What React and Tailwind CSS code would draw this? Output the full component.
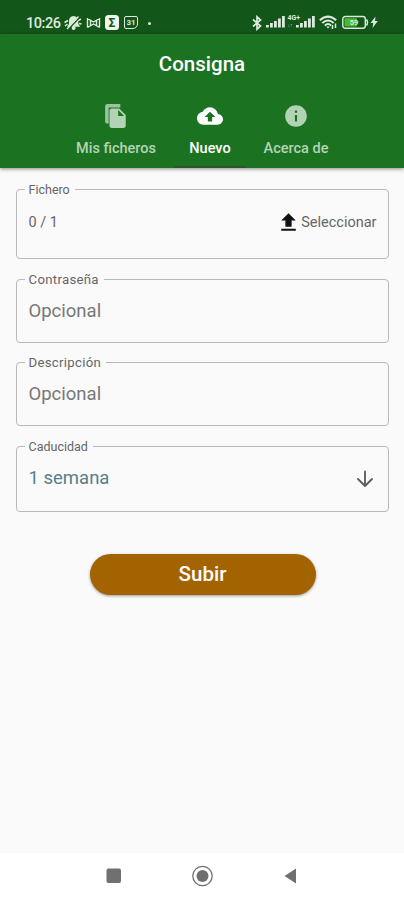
import { MdCloudUpload, MdInfo, MdUpload } from 'react-icons/md';

function FilesIcon({ className }) {
  return (
    <svg className={className} viewBox="0 0 24 24" fill="currentColor">
      <path d="M16 1H4C2.900 1 2 1.900 2 3v14c0 1.100.9 2 2 2h1.200V4.200h10.800z" opacity=".85" />
      <path d="M15 5H8c-1.100 0-2 .9-2 2v14c0 1.100.9 2 2 2h11c1.100 0 2-.9 2-2V11zm-1 7V6.500l5.500 5.500z" fillRule="evenodd" />
    </svg>
  );
}

function Signal() {
  return (
    <svg width="19" height="13" viewBox="0 0 19 13" fill="currentColor">
      <rect x="0" y="10" width="2.8" height="2.500" />
      <rect x="4" y="8" width="2.8" height="4.500" />
      <rect x="8" y="6" width="2.8" height="6.5" />
      <rect x="12" y="3.500" width="2.8" height="9" />
      <rect x="16" y="1" width="2.8" height="11.5" />
    </svg>
  );
}

function StatusBar() {
  return (
    <div className="flex h-[34px] shrink-0 items-start bg-[#125619] pt-[15px] pl-[26px] text-[#dceadd]">
      <span className="w-[37px] text-[14.500px] leading-[17px] font-medium tracking-[-0.45px] whitespace-nowrap">10:26</span>
      <svg className="ml-px" width="18" height="16" viewBox="0 0 18 16" fill="currentColor">
        <path d="M9.500 1c3 .2 4.800 2 4.800 5v3l2 2.700H3l2-2.700V6c0-2.800 1.500-4.800 4.500-5z" />
        <circle cx="9.600" cy="13" r="2" />
        <path d="M1 11 3.500 9M0.500 7.500 4 5.500M14 5.500l3-1.500M15 8.500l2.500 .5" stroke="currentColor" strokeWidth="1.600" />
        <path d="M4.500 14 15.500 2.500" stroke="#125619" strokeWidth="1.600" />
        <path d="M3 14 14.500 1.500" stroke="currentColor" strokeWidth="1.400" />
      </svg>
      <svg className="ml-[4px]" width="15" height="16" viewBox="0 0 15 16" fill="none" stroke="currentColor" strokeWidth="1.400">
        <path d="M1.500 3v9.500M13.500 3v9.500M1.500 3.500 7.500 7l6-3.500M1.500 12.500 7.500 9l6 3.500M4.500 5.500v5M10.500 5.500v5" />
      </svg>
      <span className="ml-[4px] flex h-[15px] w-[14px] items-center justify-center rounded-[3.500px] bg-[#eef6ee] text-[12px] leading-none font-bold text-[#125619]">Σ</span>
      <span className="mt-px ml-[5px] flex h-[13px] w-[14px] items-center justify-center rounded-[2px] rounded-br-[5px] border-[1.500px] border-current text-[8px] leading-none font-bold">31</span>
      <span className="mt-[7px] ml-[10px] size-[2.500px] rounded-full bg-current" />
      <svg className="ml-[101px]" width="10" height="16" viewBox="0 0 10 16" fill="none" stroke="currentColor" strokeWidth="1.700">
        <path d="M1 4.500 8.500 11 5 14.200V1.800L8.500 5 1 11.500" />
      </svg>
      <span className="ml-[4px]"><Signal /></span>
      <span className="ml-[3px] flex w-[13px] flex-col text-[7px] leading-[7px] font-bold"><span>4G+</span><span className="text-[5px] opacity-70">↓↑</span></span>
      <span className="-ml-[5px]"><Signal /></span>
      <svg className="ml-[4px]" width="20" height="15" viewBox="0 0 20 15" fill="none" stroke="currentColor" strokeWidth="2">
        <path d="M.8 5.300Q9 -2 17.200 5.300M3.300 8Q9 3 14.700 8M5.800 10.600Q9 7.500 12.200 10.600" />
        <path d="M7.200 11.500h3.600L9 13.500z" fill="currentColor" stroke="none" />
        <path d="M13.500 14V10M16.500 8.500v4.500" strokeWidth="1.500" />
      </svg>
      <svg className="ml-[3px]" width="27" height="15" viewBox="0 0 27 15">
        <rect x=".8" y="1.500" width="22.500" height="11.800" rx="2.500" fill="#125619" stroke="#dceadd" strokeWidth="1.400" />
        <rect x="2.500" y="3.200" width="12.500" height="8.400" rx="1" fill="#48bd2c" />
        <path d="M24.500 4.500q2 3 0 6" stroke="#dceadd" strokeWidth="1.500" fill="none" />
        <text x="12" y="10.200" fill="#dceadd" fontSize="7.500" fontWeight="700" textAnchor="middle">59</text>
      </svg>
      <svg className="ml-px" width="9" height="14" viewBox="0 0 9 14" fill="currentColor">
        <path d="M5.500 1.500 0.500 8h2.800L2.500 13 7.800 6H5z" />
      </svg>
    </div>
  );
}

function Tab({ icon: Icon, label, active, className }) {
  return (
    <div className={`flex flex-col items-center pt-[10px] ${active ? 'border-b-2 border-[#35502f] text-white' : 'border-b-2 border-transparent text-[#b3d3b5]'} ${className}`}>
      <Icon className="size-[26px]" />
      <span className="mt-[11px] text-[14.500px] leading-[18px] font-medium whitespace-nowrap">{label}</span>
    </div>
  );
}

function Field({ label, labelClass = 'text-[12.500px]', className, children }) {
  return (
    <fieldset className={`mx-[15.500px] rounded-[4px] border border-[#b9b9b9] pr-[11px] pl-[8px] ${className}`}>
      <legend className={`h-[13px] pr-[5px] pl-[4px] leading-[13px] whitespace-nowrap text-[#666] ${labelClass}`}>{label}</legend>
      {children}
    </fieldset>
  );
}

export default function App() {
  return (
    <div className="flex h-[900px] w-[404px] flex-col overflow-hidden bg-[#fafafa] font-[Roboto,sans-serif]">
      <StatusBar />
      <header className="h-[134px] shrink-0 bg-[#1b7322] shadow-[0_1px_4px_rgba(0,0,0,0.45)]">
        <h1 className="h-[59px] pt-[17px] text-center text-[20.500px] leading-[27px] font-medium text-white">Consigna</h1>
        <nav className="flex h-[75px] pl-[60px]">
          <Tab icon={FilesIcon} label="Mis ficheros" className="w-[112px]" />
          <Tab icon={MdCloudUpload} label="Nuevo" active className="ml-[2px] w-[72px]" />
          <Tab icon={MdInfo} label="Acerca de" className="ml-[2px] w-[96px]" />
        </nav>
      </header>
      <main className="flex flex-1 flex-col pt-[15px]">
        <Field label="Fichero" className="h-[76px]">
          <div className="flex h-[53px] items-center justify-between pl-[4px] text-[14.500px] text-[#666]">
            <span>0 / 1</span>
            <span className="flex items-center">
              <MdUpload className="size-[25px] text-[#111]" />
              <span>Seleccionar</span>
            </span>
          </div>
        </Field>
        <Field label="Contraseña" labelClass="text-[13.200px] tracking-[0.3px]" className="mt-[14px] h-[70px]">
          <input className="mt-[6px] h-[37px] w-full pl-[4px] text-[18.500px] placeholder:text-[#777]" placeholder="Opcional" />
        </Field>
        <Field label="Descripción" labelClass="text-[13.200px] tracking-[0.3px]" className="mt-[13px] h-[70px]">
          <input className="mt-[6px] h-[37px] w-full pl-[4px] text-[18.500px] placeholder:text-[#777]" placeholder="Opcional" />
        </Field>
        <Field label="Caducidad" className="mt-[14px] h-[72px]">
          <div className="mt-[6px] flex h-[40px] items-center justify-between pl-[4px] text-[18.500px] text-[#56808a]">
            <span>1 semana</span>
            <svg className="mr-[3px]" width="18" height="18" viewBox="0 0 18 18" fill="none" stroke="#606060" strokeWidth="1.900" strokeLinecap="round" strokeLinejoin="round">
              <path d="M9 1.500v14.500M2 9l7 7 7-7" />
            </svg>
          </div>
        </Field>
        <button className="mt-[42px] ml-[89.500px] h-[41px] w-[226px] rounded-full bg-[#a36300] text-[20.500px] font-medium text-white shadow-[0_1px_3px_rgba(0,0,0,0.4)]">Subir</button>
      </main>
      <footer className="flex h-[47px] shrink-0 items-center bg-white pl-[106px]">
        <svg className="-mt-px" width="190" height="24" viewBox="0 0 190 24" fill="#707070">
          <rect x="0.500" y="4.500" width="14.500" height="14.500" rx="2" />
          <circle cx="96.500" cy="12" r="9.700" fill="none" stroke="#707070" strokeWidth="1.300" />
          <circle cx="96.500" cy="12" r="6" />
          <path d="M178.500 12 191.500 3.500v17z" />
        </svg>
      </footer>
    </div>
  );
}
